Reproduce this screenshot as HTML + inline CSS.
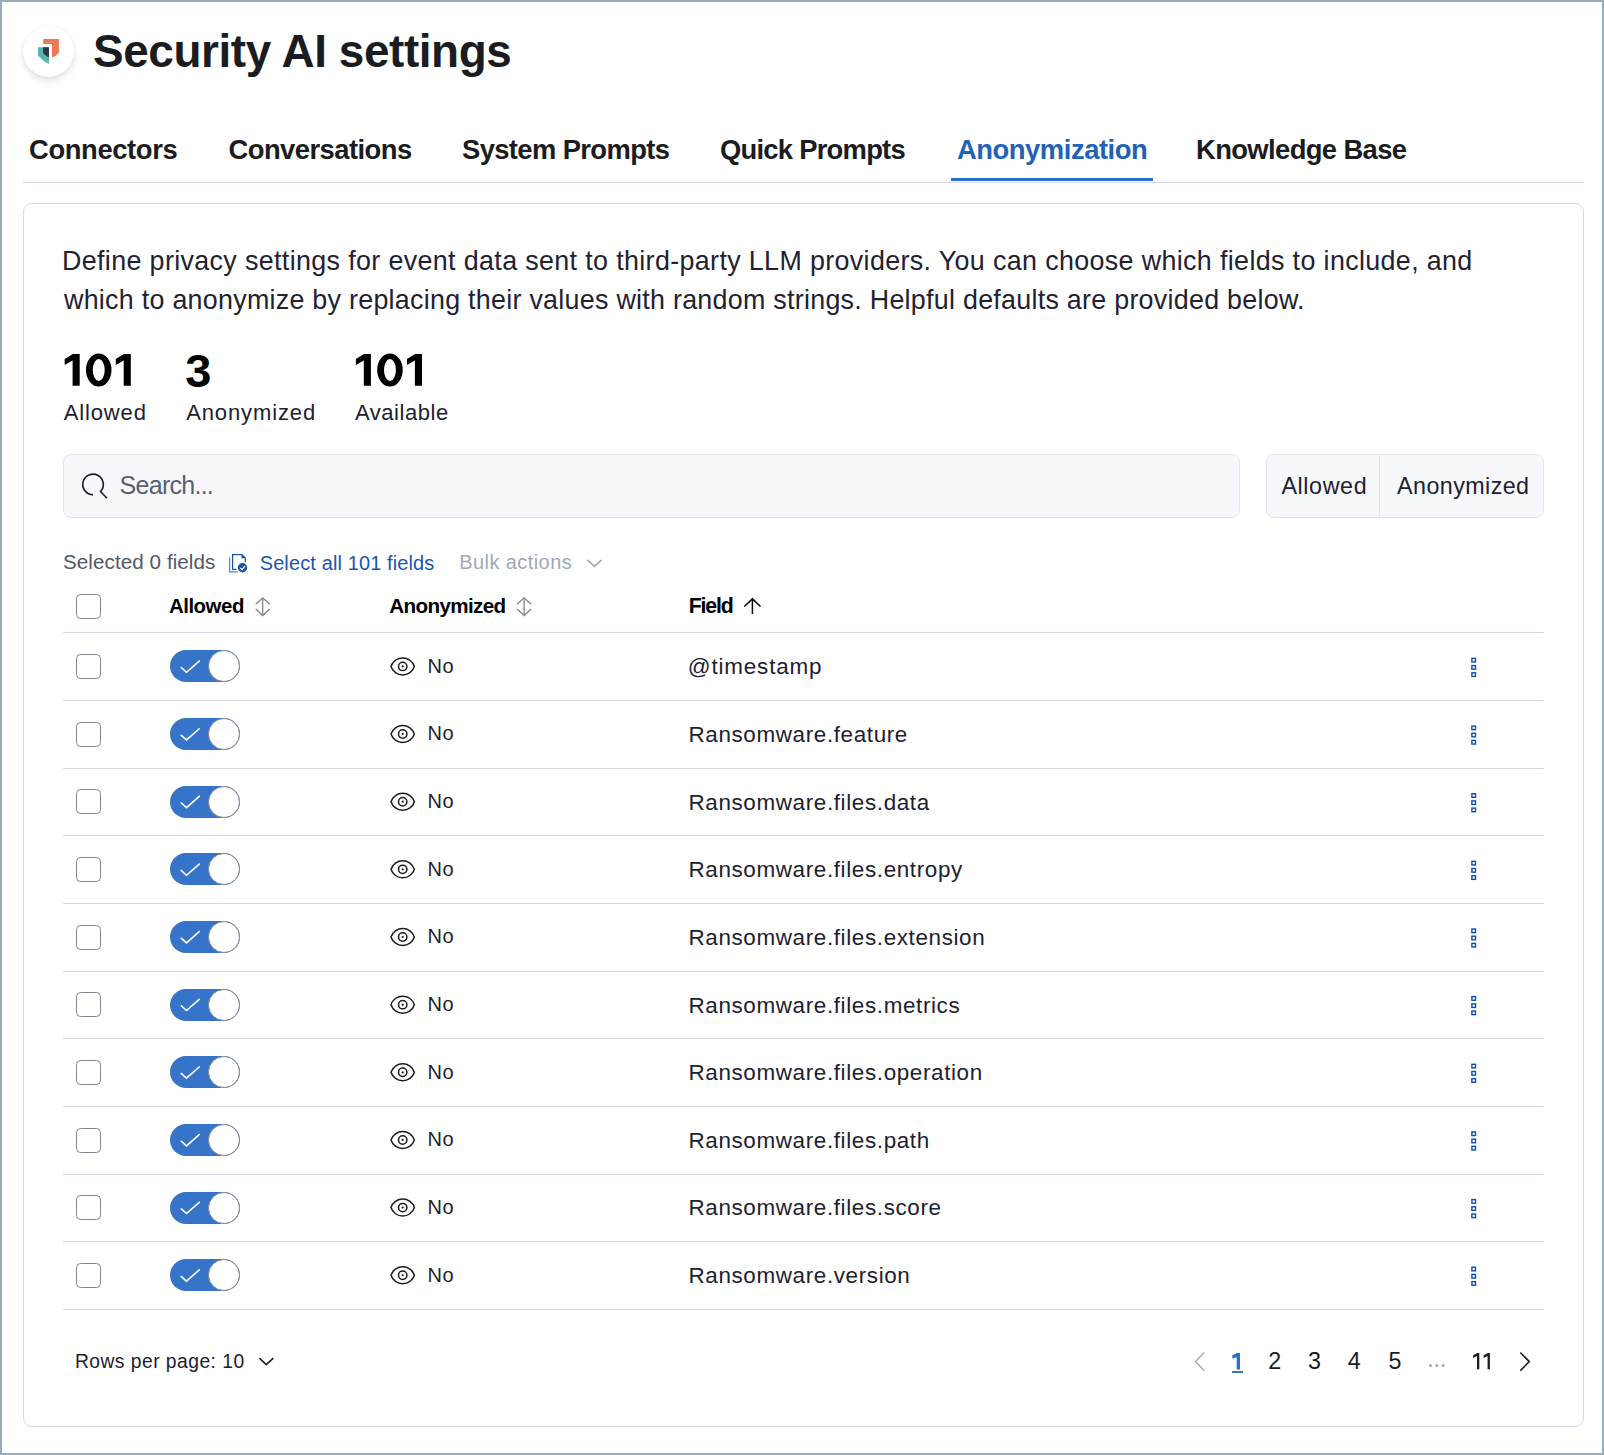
<!DOCTYPE html>
<html><head><meta charset="utf-8"><title>Security AI settings</title><style>
*{box-sizing:border-box;margin:0;padding:0}
html,body{width:1604px;height:1455px;overflow:hidden;background:#fff}
body{position:relative;font-family:"Liberation Sans",sans-serif;color:#1a1c21}
.t{position:absolute;white-space:nowrap;line-height:60px}
.frame{position:absolute;left:0;top:0;width:1604px;height:1455px;border:2px solid #97adba;z-index:10}
.logo{position:absolute;left:23px;top:26px;width:51px;height:51px;border-radius:50%;background:#fff;
 box-shadow:0 1px 4px -1px rgba(0,0,0,.10),0 3px 8px -1px rgba(0,0,0,.07),0 6px 12px -1px rgba(0,0,0,.05)}
.hl{position:absolute;height:1px;background:#d3dae6}
.card{position:absolute;left:23px;top:203px;width:1561px;height:1224px;border:1px solid #d3dae6;border-radius:9px}
.box{position:absolute;border:1px solid #e1e6ee;border-radius:8px;background:#f7f8fc}
.cb{position:absolute;width:25px;height:25px;border:1.7px solid #82878f;border-radius:4.5px;background:#fff}
.tog{position:absolute;width:70px;height:32px;border-radius:16px;background:#3574c8}
.knob{position:absolute;right:0;top:0;width:32px;height:32px;border-radius:50%;background:#fff;border:1.6px solid #878b92}
svg{position:absolute;overflow:visible}
</style></head><body>
<div class="frame"></div>
<div class="logo"></div>
<svg style="left:0;top:0" width="1" height="1" viewBox="0 0 1 1"><g><path d="M38.07,47.2 L48.96,47.2 L48.96,63.81 Q42.5,61.2 38.07,55.2 Z" fill="#54b7ad"/><path d="M43.02,47.2 L48.96,47.2 L48.96,57.43 Q45.3,55.9 43.02,53.03 Z" fill="#343741"/><path d="M43.24,39.07 L58.96,39.07 L58.96,52.6 Q56.3,56.4 52.03,57.65 L52.03,44.02 L43.24,44.02 Z" fill="#e97b5a"/></g></svg>
<div class="t" style="left:93.0px;top:20.6px;font-size:45.86px;letter-spacing:-0.4px;font-weight:bold;color:#1a1c21;">Security AI settings</div>
<div class="t" style="left:29.0px;top:119.8px;font-size:27.38px;letter-spacing:-0.378px;font-weight:bold;color:#1a1c21;">Connectors</div>
<div class="t" style="left:228.5px;top:119.8px;font-size:27.38px;letter-spacing:-0.542px;font-weight:bold;color:#1a1c21;">Conversations</div>
<div class="t" style="left:462.0px;top:119.8px;font-size:27.38px;letter-spacing:-0.615px;font-weight:bold;color:#1a1c21;">System Prompts</div>
<div class="t" style="left:720.0px;top:119.8px;font-size:27.38px;letter-spacing:-0.75px;font-weight:bold;color:#1a1c21;">Quick Prompts</div>
<div class="t" style="left:957.0px;top:119.8px;font-size:27.38px;letter-spacing:-0.458px;font-weight:bold;color:#1f63b9;">Anonymization</div>
<div class="t" style="left:1196.0px;top:119.8px;font-size:27.38px;letter-spacing:-0.615px;font-weight:bold;color:#1a1c21;">Knowledge Base</div>
<div class="hl" style="left:23px;top:182px;width:1561px"></div>
<div style="position:absolute;left:951px;top:178px;width:202px;height:3px;background:#2c6dc5"></div>
<div class="card"></div>
<div class="t" style="left:62.0px;top:231.2px;font-size:26.85px;letter-spacing:0.362px;font-weight:normal;color:#1f2232;">Define privacy settings for event data sent to third-party LLM providers. You can choose which fields to include, and</div>
<div class="t" style="left:64.0px;top:269.7px;font-size:26.85px;letter-spacing:0.272px;font-weight:normal;color:#1f2232;">which to anonymize by replacing their values with random strings. Helpful defaults are provided below.</div>
<div class="t" style="left:185.2px;top:340.6px;font-size:47.0px;letter-spacing:1.8px;font-weight:bold;color:#000;">3</div>
<svg style="left:0;top:0" width="1" height="1"><path d="M72.80,354 L79.70,354 L79.70,385.8 L72.60,385.8 L72.60,360.6 L64.70,365.1 L64.70,358.9 Z M86.00,370 A12.75,16.55 0 1 0 111.50,370 A12.75,16.55 0 1 0 86.00,370 Z M92.80,370 A5.95,11 0 1 0 104.70,370 A5.95,11 0 1 0 92.80,370 Z M123.90,354 L130.80,354 L130.80,385.8 L123.70,385.8 L123.70,360.6 L115.80,365.1 L115.80,358.9 Z" fill="#000" fill-rule="evenodd"/></svg>
<svg style="left:0;top:0" width="1" height="1"><path d="M364.00,354 L370.90,354 L370.90,385.8 L363.80,385.8 L363.80,360.6 L355.90,365.1 L355.90,358.9 Z M377.20,370 A12.75,16.55 0 1 0 402.70,370 A12.75,16.55 0 1 0 377.20,370 Z M384.00,370 A5.95,11 0 1 0 395.90,370 A5.95,11 0 1 0 384.00,370 Z M415.10,354 L422.00,354 L422.00,385.8 L414.90,385.8 L414.90,360.6 L407.00,365.1 L407.00,358.9 Z" fill="#000" fill-rule="evenodd"/></svg>
<div class="t" style="left:63.7px;top:382.9px;font-size:22.02px;letter-spacing:0.85px;font-weight:normal;color:#1d2130;">Allowed</div>
<div class="t" style="left:186.2px;top:382.9px;font-size:22.02px;letter-spacing:0.867px;font-weight:normal;color:#1d2130;">Anonymized</div>
<div class="t" style="left:355.0px;top:382.9px;font-size:22.02px;letter-spacing:0.525px;font-weight:normal;color:#1d2130;">Available</div>
<div class="box" style="left:63px;top:454px;width:1177px;height:64px"></div>
<svg style="left:0;top:0" width="1" height="1"><path d="M93.05,494.8 A10.3,10.3 0 1 1 100.5,491.6 L107,498.3" fill="none" stroke="#1a1c21" stroke-width="1.6"/></svg>
<div class="t" style="left:119.6px;top:455.2px;font-size:25.05px;letter-spacing:-0.75px;font-weight:normal;color:#5a6070;">Search...</div>
<div class="box" style="left:1266px;top:454px;width:278px;height:64px"></div>
<div style="position:absolute;left:1379px;top:455px;width:1px;height:62px;background:#e1e6ee"></div>
<div class="t" style="left:1281.4px;top:456.0px;font-size:23.29px;letter-spacing:0.617px;font-weight:normal;color:#1d2130;">Allowed</div>
<div class="t" style="left:1397.1px;top:456.0px;font-size:23.29px;letter-spacing:0.422px;font-weight:normal;color:#1d2130;">Anonymized</div>
<div class="t" style="left:63.0px;top:532.1px;font-size:20.61px;letter-spacing:0.069px;font-weight:normal;color:#535966;">Selected 0 fields</div>
<svg style="left:0;top:0" width="1" height="1"><g fill="none" stroke="#1a55ab" stroke-width="1.25"><path d="M229.6,557.2 V571.9 H237.6" stroke="#5a84c4"/><path d="M236.4,569.3 H232.6 V554.6 H241.9 L245.3,558 V562.3"/></g><path d="M241.5,554.5 V558.3 H245.4 Z" fill="#1a55ab"/><circle cx="242.5" cy="567.7" r="4.7" fill="#1a55ab"/><path d="M240.2,567.8 L242,569.6 L245,566.1" fill="none" stroke="#fff" stroke-width="1.2"/></svg>
<div class="t" style="left:259.7px;top:532.5px;font-size:19.98px;letter-spacing:0.13px;font-weight:normal;color:#1a56ad;">Select all 101 fields</div>
<div class="t" style="left:459.3px;top:532.2px;font-size:19.98px;letter-spacing:0.427px;font-weight:normal;color:#a0a9b8;">Bulk actions</div>
<svg style="left:0;top:0" width="1" height="1"><path d="M587.3,559.8 L594.5,566.3 L601.6,559.8" fill="none" stroke="#a0a9b8" stroke-width="1.6"/></svg>
<div class="cb" style="left:76px;top:594px"></div>
<div class="t" style="left:168.9px;top:575.8px;font-size:20.4px;letter-spacing:-0.45px;font-weight:bold;color:#000;">Allowed</div>
<div class="t" style="left:389.2px;top:575.7px;font-size:20.61px;letter-spacing:-0.611px;font-weight:bold;color:#000;">Anonymized</div>
<div class="t" style="left:688.8px;top:575.9px;font-size:21.28px;letter-spacing:-1.175px;font-weight:bold;color:#000;">Field</div>
<svg style="left:0;top:0" width="1" height="1"><g fill="none" stroke="#878787" stroke-width="1.3"><path d="M255.7,604.3 L262.7,597.8 L269.7,604.3"/><path d="M255.7,609 L262.7,615.5 L269.7,609"/><path d="M262.7,598 V615.3"/></g></svg>
<svg style="left:0;top:0" width="1" height="1"><g fill="none" stroke="#878787" stroke-width="1.3"><path d="M517.1,604.3 L524.1,597.8 L531.1,604.3"/><path d="M517.1,609 L524.1,615.5 L531.1,609"/><path d="M524.1,598 V615.3"/></g></svg>
<svg style="left:0;top:0" width="1" height="1"><g fill="none" stroke="#000" stroke-width="1.5"><path d="M744.3,606.5 L752.4,598.9 L760.5,606.5"/><path d="M752.4,599 V614"/></g></svg>
<div class="hl" style="left:63px;top:632px;width:1481px"></div>
<div class="cb" style="left:76px;top:654.00px"></div>
<div class="tog" style="left:169.5px;top:650.30px"><div class="knob"></div></div>
<svg style="left:0;top:0" width="1" height="1"><path d="M180.8,667.20 L186.5,672.30 L199.8,660.60" fill="none" stroke="#fff" stroke-width="1.6"/></svg>
<svg style="left:0;top:0" width="1" height="1"><g fill="none" stroke="#1a1c21" stroke-width="1.5"><path d="M391,666.40 A12.3,12.3 0 0 1 414.4,666.40 A12.3,12.3 0 0 1 391,666.40 Z" stroke-linejoin="miter"/><circle cx="402.7" cy="666.40" r="4.2"/></g><circle cx="402.7" cy="666.40" r="1.1" fill="#1a1c21"/></svg>
<div class="t" style="left:427.4px;top:635.80px;font-size:19.98px;letter-spacing:0.6px;color:#1d2130">No</div>
<div class="t" style="left:687.8px;top:637.30px;font-size:22.43px;letter-spacing:0.833px;color:#1d2130">@timestamp</div>
<svg style="left:0;top:0" width="1" height="1"><g fill="#fff" stroke="#0f4ea6" stroke-width="1.4"><rect x="1471.9" y="658.40" width="3.6" height="3.6"/><rect x="1471.9" y="665.60" width="3.6" height="3.6"/><rect x="1471.9" y="672.80" width="3.6" height="3.6"/></g></svg>
<div class="hl" style="left:63px;top:700.00px;width:1481px"></div>
<div class="cb" style="left:76px;top:721.65px"></div>
<div class="tog" style="left:169.5px;top:717.95px"><div class="knob"></div></div>
<svg style="left:0;top:0" width="1" height="1"><path d="M180.8,734.85 L186.5,739.95 L199.8,728.25" fill="none" stroke="#fff" stroke-width="1.6"/></svg>
<svg style="left:0;top:0" width="1" height="1"><g fill="none" stroke="#1a1c21" stroke-width="1.5"><path d="M391,734.05 A12.3,12.3 0 0 1 414.4,734.05 A12.3,12.3 0 0 1 391,734.05 Z" stroke-linejoin="miter"/><circle cx="402.7" cy="734.05" r="4.2"/></g><circle cx="402.7" cy="734.05" r="1.1" fill="#1a1c21"/></svg>
<div class="t" style="left:427.4px;top:703.45px;font-size:19.98px;letter-spacing:0.6px;color:#1d2130">No</div>
<div class="t" style="left:688.5px;top:704.90px;font-size:22.43px;letter-spacing:0.63px;color:#1d2130">Ransomware.feature</div>
<svg style="left:0;top:0" width="1" height="1"><g fill="#fff" stroke="#0f4ea6" stroke-width="1.4"><rect x="1471.9" y="726.05" width="3.6" height="3.6"/><rect x="1471.9" y="733.25" width="3.6" height="3.6"/><rect x="1471.9" y="740.45" width="3.6" height="3.6"/></g></svg>
<div class="hl" style="left:63px;top:767.65px;width:1481px"></div>
<div class="cb" style="left:76px;top:789.30px"></div>
<div class="tog" style="left:169.5px;top:785.60px"><div class="knob"></div></div>
<svg style="left:0;top:0" width="1" height="1"><path d="M180.8,802.50 L186.5,807.60 L199.8,795.90" fill="none" stroke="#fff" stroke-width="1.6"/></svg>
<svg style="left:0;top:0" width="1" height="1"><g fill="none" stroke="#1a1c21" stroke-width="1.5"><path d="M391,801.70 A12.3,12.3 0 0 1 414.4,801.70 A12.3,12.3 0 0 1 391,801.70 Z" stroke-linejoin="miter"/><circle cx="402.7" cy="801.70" r="4.2"/></g><circle cx="402.7" cy="801.70" r="1.1" fill="#1a1c21"/></svg>
<div class="t" style="left:427.4px;top:771.10px;font-size:19.98px;letter-spacing:0.6px;color:#1d2130">No</div>
<div class="t" style="left:688.5px;top:772.55px;font-size:22.43px;letter-spacing:0.63px;color:#1d2130">Ransomware.files.data</div>
<svg style="left:0;top:0" width="1" height="1"><g fill="#fff" stroke="#0f4ea6" stroke-width="1.4"><rect x="1471.9" y="793.70" width="3.6" height="3.6"/><rect x="1471.9" y="800.90" width="3.6" height="3.6"/><rect x="1471.9" y="808.10" width="3.6" height="3.6"/></g></svg>
<div class="hl" style="left:63px;top:835.30px;width:1481px"></div>
<div class="cb" style="left:76px;top:856.95px"></div>
<div class="tog" style="left:169.5px;top:853.25px"><div class="knob"></div></div>
<svg style="left:0;top:0" width="1" height="1"><path d="M180.8,870.15 L186.5,875.25 L199.8,863.55" fill="none" stroke="#fff" stroke-width="1.6"/></svg>
<svg style="left:0;top:0" width="1" height="1"><g fill="none" stroke="#1a1c21" stroke-width="1.5"><path d="M391,869.35 A12.3,12.3 0 0 1 414.4,869.35 A12.3,12.3 0 0 1 391,869.35 Z" stroke-linejoin="miter"/><circle cx="402.7" cy="869.35" r="4.2"/></g><circle cx="402.7" cy="869.35" r="1.1" fill="#1a1c21"/></svg>
<div class="t" style="left:427.4px;top:838.75px;font-size:19.98px;letter-spacing:0.6px;color:#1d2130">No</div>
<div class="t" style="left:688.5px;top:840.20px;font-size:22.43px;letter-spacing:0.63px;color:#1d2130">Ransomware.files.entropy</div>
<svg style="left:0;top:0" width="1" height="1"><g fill="#fff" stroke="#0f4ea6" stroke-width="1.4"><rect x="1471.9" y="861.35" width="3.6" height="3.6"/><rect x="1471.9" y="868.55" width="3.6" height="3.6"/><rect x="1471.9" y="875.75" width="3.6" height="3.6"/></g></svg>
<div class="hl" style="left:63px;top:902.95px;width:1481px"></div>
<div class="cb" style="left:76px;top:924.60px"></div>
<div class="tog" style="left:169.5px;top:920.90px"><div class="knob"></div></div>
<svg style="left:0;top:0" width="1" height="1"><path d="M180.8,937.80 L186.5,942.90 L199.8,931.20" fill="none" stroke="#fff" stroke-width="1.6"/></svg>
<svg style="left:0;top:0" width="1" height="1"><g fill="none" stroke="#1a1c21" stroke-width="1.5"><path d="M391,937.00 A12.3,12.3 0 0 1 414.4,937.00 A12.3,12.3 0 0 1 391,937.00 Z" stroke-linejoin="miter"/><circle cx="402.7" cy="937.00" r="4.2"/></g><circle cx="402.7" cy="937.00" r="1.1" fill="#1a1c21"/></svg>
<div class="t" style="left:427.4px;top:906.40px;font-size:19.98px;letter-spacing:0.6px;color:#1d2130">No</div>
<div class="t" style="left:688.5px;top:907.85px;font-size:22.43px;letter-spacing:0.63px;color:#1d2130">Ransomware.files.extension</div>
<svg style="left:0;top:0" width="1" height="1"><g fill="#fff" stroke="#0f4ea6" stroke-width="1.4"><rect x="1471.9" y="929.00" width="3.6" height="3.6"/><rect x="1471.9" y="936.20" width="3.6" height="3.6"/><rect x="1471.9" y="943.40" width="3.6" height="3.6"/></g></svg>
<div class="hl" style="left:63px;top:970.60px;width:1481px"></div>
<div class="cb" style="left:76px;top:992.25px"></div>
<div class="tog" style="left:169.5px;top:988.55px"><div class="knob"></div></div>
<svg style="left:0;top:0" width="1" height="1"><path d="M180.8,1005.45 L186.5,1010.55 L199.8,998.85" fill="none" stroke="#fff" stroke-width="1.6"/></svg>
<svg style="left:0;top:0" width="1" height="1"><g fill="none" stroke="#1a1c21" stroke-width="1.5"><path d="M391,1004.65 A12.3,12.3 0 0 1 414.4,1004.65 A12.3,12.3 0 0 1 391,1004.65 Z" stroke-linejoin="miter"/><circle cx="402.7" cy="1004.65" r="4.2"/></g><circle cx="402.7" cy="1004.65" r="1.1" fill="#1a1c21"/></svg>
<div class="t" style="left:427.4px;top:974.05px;font-size:19.98px;letter-spacing:0.6px;color:#1d2130">No</div>
<div class="t" style="left:688.5px;top:975.50px;font-size:22.43px;letter-spacing:0.63px;color:#1d2130">Ransomware.files.metrics</div>
<svg style="left:0;top:0" width="1" height="1"><g fill="#fff" stroke="#0f4ea6" stroke-width="1.4"><rect x="1471.9" y="996.65" width="3.6" height="3.6"/><rect x="1471.9" y="1003.85" width="3.6" height="3.6"/><rect x="1471.9" y="1011.05" width="3.6" height="3.6"/></g></svg>
<div class="hl" style="left:63px;top:1038.25px;width:1481px"></div>
<div class="cb" style="left:76px;top:1059.90px"></div>
<div class="tog" style="left:169.5px;top:1056.20px"><div class="knob"></div></div>
<svg style="left:0;top:0" width="1" height="1"><path d="M180.8,1073.10 L186.5,1078.20 L199.8,1066.50" fill="none" stroke="#fff" stroke-width="1.6"/></svg>
<svg style="left:0;top:0" width="1" height="1"><g fill="none" stroke="#1a1c21" stroke-width="1.5"><path d="M391,1072.30 A12.3,12.3 0 0 1 414.4,1072.30 A12.3,12.3 0 0 1 391,1072.30 Z" stroke-linejoin="miter"/><circle cx="402.7" cy="1072.30" r="4.2"/></g><circle cx="402.7" cy="1072.30" r="1.1" fill="#1a1c21"/></svg>
<div class="t" style="left:427.4px;top:1041.70px;font-size:19.98px;letter-spacing:0.6px;color:#1d2130">No</div>
<div class="t" style="left:688.5px;top:1043.15px;font-size:22.43px;letter-spacing:0.63px;color:#1d2130">Ransomware.files.operation</div>
<svg style="left:0;top:0" width="1" height="1"><g fill="#fff" stroke="#0f4ea6" stroke-width="1.4"><rect x="1471.9" y="1064.30" width="3.6" height="3.6"/><rect x="1471.9" y="1071.50" width="3.6" height="3.6"/><rect x="1471.9" y="1078.70" width="3.6" height="3.6"/></g></svg>
<div class="hl" style="left:63px;top:1105.90px;width:1481px"></div>
<div class="cb" style="left:76px;top:1127.55px"></div>
<div class="tog" style="left:169.5px;top:1123.85px"><div class="knob"></div></div>
<svg style="left:0;top:0" width="1" height="1"><path d="M180.8,1140.75 L186.5,1145.85 L199.8,1134.15" fill="none" stroke="#fff" stroke-width="1.6"/></svg>
<svg style="left:0;top:0" width="1" height="1"><g fill="none" stroke="#1a1c21" stroke-width="1.5"><path d="M391,1139.95 A12.3,12.3 0 0 1 414.4,1139.95 A12.3,12.3 0 0 1 391,1139.95 Z" stroke-linejoin="miter"/><circle cx="402.7" cy="1139.95" r="4.2"/></g><circle cx="402.7" cy="1139.95" r="1.1" fill="#1a1c21"/></svg>
<div class="t" style="left:427.4px;top:1109.35px;font-size:19.98px;letter-spacing:0.6px;color:#1d2130">No</div>
<div class="t" style="left:688.5px;top:1110.80px;font-size:22.43px;letter-spacing:0.63px;color:#1d2130">Ransomware.files.path</div>
<svg style="left:0;top:0" width="1" height="1"><g fill="#fff" stroke="#0f4ea6" stroke-width="1.4"><rect x="1471.9" y="1131.95" width="3.6" height="3.6"/><rect x="1471.9" y="1139.15" width="3.6" height="3.6"/><rect x="1471.9" y="1146.35" width="3.6" height="3.6"/></g></svg>
<div class="hl" style="left:63px;top:1173.55px;width:1481px"></div>
<div class="cb" style="left:76px;top:1195.20px"></div>
<div class="tog" style="left:169.5px;top:1191.50px"><div class="knob"></div></div>
<svg style="left:0;top:0" width="1" height="1"><path d="M180.8,1208.40 L186.5,1213.50 L199.8,1201.80" fill="none" stroke="#fff" stroke-width="1.6"/></svg>
<svg style="left:0;top:0" width="1" height="1"><g fill="none" stroke="#1a1c21" stroke-width="1.5"><path d="M391,1207.60 A12.3,12.3 0 0 1 414.4,1207.60 A12.3,12.3 0 0 1 391,1207.60 Z" stroke-linejoin="miter"/><circle cx="402.7" cy="1207.60" r="4.2"/></g><circle cx="402.7" cy="1207.60" r="1.1" fill="#1a1c21"/></svg>
<div class="t" style="left:427.4px;top:1177.00px;font-size:19.98px;letter-spacing:0.6px;color:#1d2130">No</div>
<div class="t" style="left:688.5px;top:1178.45px;font-size:22.43px;letter-spacing:0.63px;color:#1d2130">Ransomware.files.score</div>
<svg style="left:0;top:0" width="1" height="1"><g fill="#fff" stroke="#0f4ea6" stroke-width="1.4"><rect x="1471.9" y="1199.60" width="3.6" height="3.6"/><rect x="1471.9" y="1206.80" width="3.6" height="3.6"/><rect x="1471.9" y="1214.00" width="3.6" height="3.6"/></g></svg>
<div class="hl" style="left:63px;top:1241.20px;width:1481px"></div>
<div class="cb" style="left:76px;top:1262.85px"></div>
<div class="tog" style="left:169.5px;top:1259.15px"><div class="knob"></div></div>
<svg style="left:0;top:0" width="1" height="1"><path d="M180.8,1276.05 L186.5,1281.15 L199.8,1269.45" fill="none" stroke="#fff" stroke-width="1.6"/></svg>
<svg style="left:0;top:0" width="1" height="1"><g fill="none" stroke="#1a1c21" stroke-width="1.5"><path d="M391,1275.25 A12.3,12.3 0 0 1 414.4,1275.25 A12.3,12.3 0 0 1 391,1275.25 Z" stroke-linejoin="miter"/><circle cx="402.7" cy="1275.25" r="4.2"/></g><circle cx="402.7" cy="1275.25" r="1.1" fill="#1a1c21"/></svg>
<div class="t" style="left:427.4px;top:1244.65px;font-size:19.98px;letter-spacing:0.6px;color:#1d2130">No</div>
<div class="t" style="left:688.5px;top:1246.10px;font-size:22.43px;letter-spacing:0.63px;color:#1d2130">Ransomware.version</div>
<svg style="left:0;top:0" width="1" height="1"><g fill="#fff" stroke="#0f4ea6" stroke-width="1.4"><rect x="1471.9" y="1267.25" width="3.6" height="3.6"/><rect x="1471.9" y="1274.45" width="3.6" height="3.6"/><rect x="1471.9" y="1281.65" width="3.6" height="3.6"/></g></svg>
<div class="hl" style="left:63px;top:1308.85px;width:1481px"></div>
<div class="t" style="left:74.9px;top:1331.9px;font-size:19.3px;letter-spacing:0.463px;font-weight:normal;color:#1d2130;">Rows per page: 10</div>
<svg style="left:0;top:0" width="1" height="1"><path d="M259.3,1358.2 L266.3,1364.6 L273.3,1358.2" fill="none" stroke="#1a1c21" stroke-width="1.6"/></svg>
<svg style="left:0;top:0" width="1" height="1"><path d="M1204.2,1352.5 L1195.5,1361.6 L1204.2,1370.7" fill="none" stroke="#a2abba" stroke-width="1.5"/></svg>
<svg style="left:0;top:0" width="1" height="1"><path d="M1236.7,1353 L1240.0,1353 L1240.0,1369.4 L1236.7,1369.4 L1236.7,1357.2 L1232.3,1358.6 L1232.3,1355.2 L1236.9,1353 Z" fill="#2a6fcc"/></svg>
<div style="position:absolute;left:1231.9px;top:1371.2px;width:10.8px;height:1.6px;background:#3a78cf"></div>
<svg style="left:0;top:0" width="1" height="1"><path d="M1477.00,1353 L1479.30,1353 L1479.30,1369.3 L1477.00,1369.3 L1477.00,1356.0 L1473.00,1358.1 L1473.00,1355.6 L1477.20,1353 Z M1487.60,1353 L1489.90,1353 L1489.90,1369.3 L1487.60,1369.3 L1487.60,1356.0 L1483.60,1358.1 L1483.60,1355.6 L1487.80,1353 Z" fill="#1a1c21"/></svg>
<div class="t" style="left:1268.2px;top:1331.3px;font-size:23.29px;letter-spacing:0.6px;font-weight:normal;color:#1a1c21;">2</div>
<div class="t" style="left:1307.9px;top:1331.3px;font-size:23.29px;letter-spacing:0.8px;font-weight:normal;color:#1a1c21;">3</div>
<div class="t" style="left:1347.7px;top:1331.3px;font-size:23.29px;letter-spacing:1.3px;font-weight:normal;color:#1a1c21;">4</div>
<div class="t" style="left:1388.6px;top:1331.3px;font-size:23.29px;letter-spacing:0.5px;font-weight:normal;color:#1a1c21;">5</div>
<svg style="left:0;top:0" width="1" height="1"><g fill="#a0a9b8"><circle cx="1430.5" cy="1365.5" r="1.5"/><circle cx="1436.8" cy="1365.5" r="1.5"/><circle cx="1443.1" cy="1365.5" r="1.5"/></g></svg>
<svg style="left:0;top:0" width="1" height="1"><path d="M1520.3,1352.5 L1529.3,1361.6 L1520.3,1370.7" fill="none" stroke="#1a1c21" stroke-width="1.6"/></svg>
</body></html>
